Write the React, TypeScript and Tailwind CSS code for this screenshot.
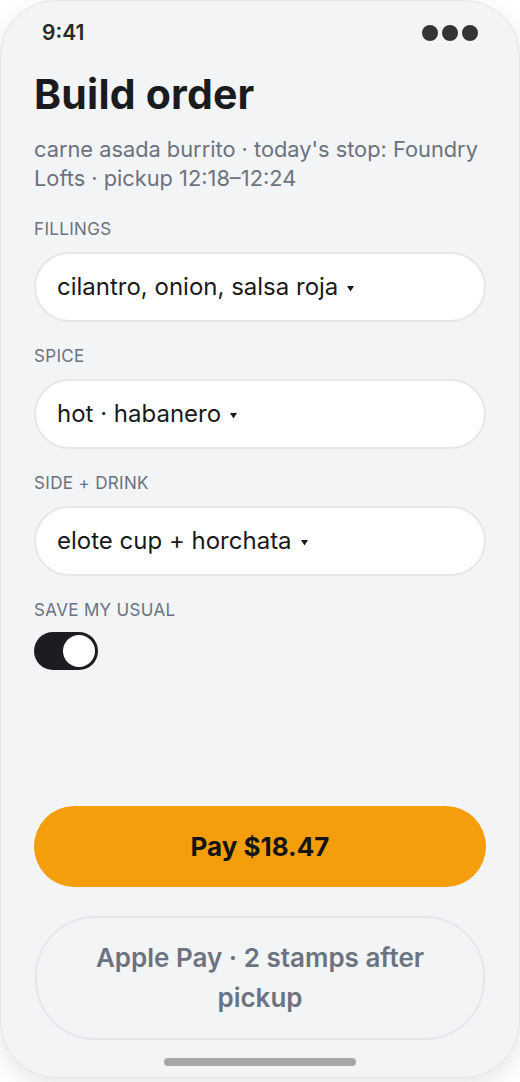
import React from "react";

const font = { fontFamily: "Inter, 'Noto Sans', sans-serif" };

function Caret() {
  return (
    <svg width="7" height="7" viewBox="0 0 7 7" className="ml-[9px] mt-[2px]">
      <path d="M0 1 L7 1 L3.5 6.5 Z" fill="#1a1a1a" />
    </svg>
  );
}

function Field({ label, value }: { label: string; value: string }) {
  return (
    <div className="flex flex-col">
      <div className="text-[17px] leading-[24px] text-[#6b7280] uppercase tracking-[0.02em]">{label}</div>
      <div className="mt-[11px] h-[70px] rounded-full border-2 border-[#e5e7eb] bg-white flex items-center pl-[21px]">
        <span className="text-[24px] text-[#1a1a1a]">{value}</span>
        <Caret />
      </div>
    </div>
  );
}

export default function App() {
  return (
    <div className="w-[520px] h-[1082px] bg-white" style={font}>
      <div className="relative w-[520px] h-[1078px] rounded-[56px] border border-[#e3e4e8] bg-[#f3f4f6] shadow-[0_8px_24px_rgba(0,0,0,0.10)] flex flex-col px-[33px] overflow-hidden">
        <div className="pt-[20px] h-[44px] flex items-center justify-between pl-[8px] pr-[8px]">
          <span className="text-[21px] leading-[24px] font-semibold text-[#2a2a2a]">9:41</span>
          <div className="flex gap-[4px]">
            <span className="w-[16px] h-[16px] rounded-full bg-[#333436]" />
            <span className="w-[16px] h-[16px] rounded-full bg-[#333436]" />
            <span className="w-[16px] h-[16px] rounded-full bg-[#333436]" />
          </div>
        </div>
        <h1 className="mt-[26px] text-[41px] leading-[47px] font-bold text-[#1a1b1e] tracking-[0.005em]">Build order</h1>
        <p className="mt-[17px] text-[21.8px] leading-[29px] text-[#6b7280]">
          carne asada burrito · today's stop: Foundry Lofts · pickup 12:18–12:24
        </p>
        <div className="mt-[24px] flex flex-col gap-[22px]">
          <Field label="Fillings" value="cilantro, onion, salsa roja" />
          <Field label="Spice" value="hot · habanero" />
          <Field label="Side + drink" value="elote cup + horchata" />
          <div className="flex flex-col">
            <div className="text-[17px] leading-[24px] text-[#6b7280] uppercase tracking-[0.02em]">Save my usual</div>
            <div className="mt-[10px] w-[64px] h-[38px] rounded-full bg-[#1c1d21] p-[3px] flex justify-end">
              <span className="w-[32px] h-[32px] rounded-full bg-white" />
            </div>
          </div>
        </div>
        <div className="mt-auto flex flex-col">
          <button className="h-[81px] w-full rounded-full bg-[#f59e0b] text-[26px] font-bold text-[#141414]">Pay $18.47</button>
          <div className="mt-[29px] h-[124px] mx-[1px] rounded-[60px] border-2 border-[#e5e7eb] flex items-center justify-center px-[50px] text-center">
            <span className="text-[26px] leading-[40px] font-semibold text-[#6b7280]">Apple Pay · 2 stamps after pickup</span>
          </div>
          <div className="mt-[18px] mb-[11px] mx-auto w-[192px] h-[8px] rounded-full bg-[#a6a7a9]" />
        </div>
      </div>
    </div>
  );
}
